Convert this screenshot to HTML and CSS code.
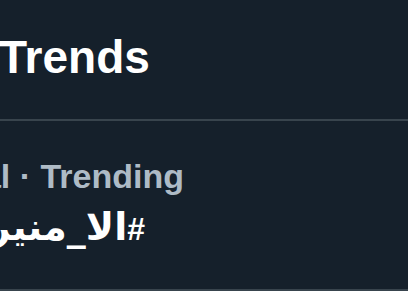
FILE: index.html
```html
<!DOCTYPE html>
<html lang="en">
<head>
    <meta charset="UTF-8">
    <meta name="viewport" content="width=device-width, initial-scale=1.0">
    <title>Trends</title>
    <link rel="stylesheet" href="styles.css">
</head>
<body>
    <div id="trends">
        <div class="trends-header">
            <h2 class="trends-title">Trends</h2>
        </div>
        <div class="trend">
            <div class="trend-meta">Political · Trending</div>
            <div class="trend-name" dir="rtl">#<span class="trend-arabic">الا_منيره</span></div>
        </div>
    </div>
</body>
</html>
```

FILE: styles.css
```css
body {
    background-color: #15202b;
    font-family: 'Liberation Sans', 'DejaVu Sans', sans-serif;
    margin: 0;
    overflow: hidden;
}
#trends {
    width: 100%;
    height: 100vh;
    background-color: #15202b;
}
.trends-header {
    padding: 35px 0 39px 0;
    border-bottom: 2px solid #38444d;
}
.trends-title {
    margin: 0 0 0 -1px;
    font-size: 46px;
    line-height: 45px;
    font-weight: bold;
    color: #ffffff;
}
.trend {
    padding: 38px 0 44px 0;
    border-bottom: 2px solid #38444d;
}
.trend-meta {
    width: 184px;
    direction: rtl;
    white-space: nowrap;
    font-size: 34px;
    line-height: 34px;
    font-weight: bold;
    color: #aebbc6;
}
.trend-name {
    width: 145px;
    margin-top: 18px;
    white-space: nowrap;
    font-size: 32px;
    line-height: 32px;
    font-weight: bold;
    color: #ffffff;
}
.trend-arabic {
    font-family: 'DejaVu Sans', sans-serif;
    font-size: 38px;
    line-height: 32px;
}
```
